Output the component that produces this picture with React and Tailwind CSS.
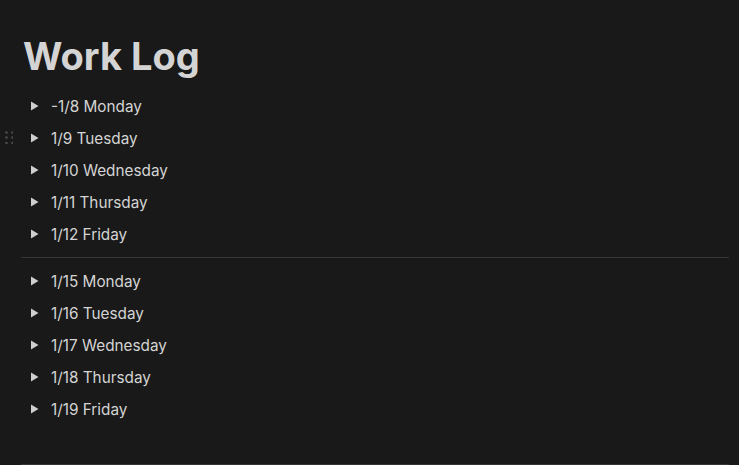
import React from 'react';

const weekOne = ['-1/8 Monday', '1/9 Tuesday', '1/10 Wednesday', '1/11 Thursday', '1/12 Friday'];
const weekTwo = ['1/15 Monday', '1/16 Tuesday', '1/17 Wednesday', '1/18 Thursday', '1/19 Friday'];

function Triangle() {
    return (
        <svg width="9" height="10" viewBox="0 0 9 10" className="block">
            <path d="M1 0.5 L8.5 5 L1 9.5 Z" fill="#cfcfcf" />
        </svg>
    );
}

function DragHandle() {
    // handle shown on hover, sits left of the row
    return (
        <svg width="10" height="14" viewBox="0 0 10 14" className="absolute left-[3px] top-[9px]">
            {[1.5, 6.5, 12].map(y => (
                <g key={y}>
                    <circle cx="3.5" cy={y} r="1.3" fill="#4a4a4a" />
                    <circle cx="9.5" cy={y} r="1.3" fill="#4a4a4a" />
                </g>
            ))}
        </svg>
    );
}

function Toggle({ label, hover }) {
    return (
        <div className="relative flex items-center h-8 pl-[24px]">
            {hover && <DragHandle />}
            <div className="w-[27px] flex items-center pl-[6px]">
                <Triangle />
            </div>
            <span className="text-[15.3px] text-[#d4d4d4] leading-none pt-[2px]">{label}</span>
        </div>
    );
}

export default function App() {
    return (
        <div className="w-[739px] h-[465px] bg-[#191919] overflow-hidden" style={{ fontFamily: 'Inter, "Noto Sans", sans-serif' }}>
            <div className="pt-[33px]">
                <h1 className="pl-[23px] text-[38px] font-bold text-[#d4d4d4] leading-[46px]">Work Log</h1>
                <div className="mt-[11px]">
                    {weekOne.map((d, i) => (
                        <Toggle key={d} label={d} hover={i === 1} />
                    ))}
                </div>
                <div className="py-[7px] pl-[21px] pr-[10px]">
                    <div className="h-px bg-[#353535]" />
                </div>
                <div>
                    {weekTwo.map(d => (
                        <Toggle key={d} label={d} />
                    ))}
                </div>
                <div className="pt-[39px] pl-[21px] pr-[10px]">
                    <div className="h-px bg-[#353535]" />
                </div>
            </div>
        </div>
    );
}
